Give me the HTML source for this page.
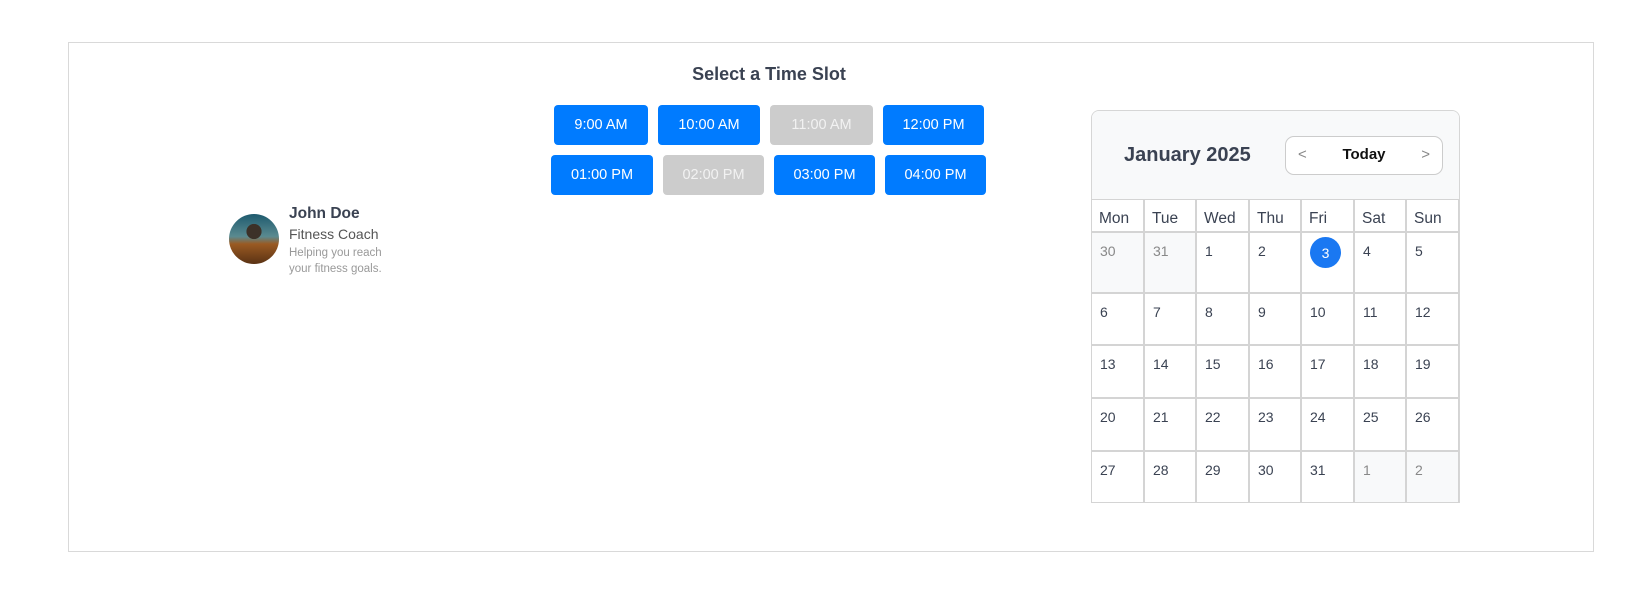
<!DOCTYPE html>
<html><head><meta charset="utf-8"><style>
*{box-sizing:border-box;margin:0;padding:0}
body{width:1636px;height:599px;background:#fff;font-family:"Liberation Sans",sans-serif;position:relative;overflow:hidden;color:#3a4252}
.box{position:absolute;left:68px;top:42px;width:1526px;height:510px;border:1px solid #d9d9d9}
.title{position:absolute;left:0;width:1538px;top:64px;text-align:center;font-size:18px;font-weight:bold;color:#3a4252}
.b{position:absolute;height:40px;border-radius:4px;background:#007bff;color:#fff;font-size:14.5px;display:flex;align-items:center;justify-content:center}
.g{background:#cccccc;color:#f2f2f2}
.av{position:absolute;left:229px;top:214px;width:50px;height:50px;border-radius:50%;background:radial-gradient(circle at 50% 35%,#3c3128 0 18%,transparent 19%),linear-gradient(180deg,#1e5a6e 0%,#5a8a90 45%,#9a5a22 60%,#5a3214 100%)}
.cal{position:absolute;left:1091px;top:110px;width:369px;height:393px;border:1px solid #d6d6d6;border-radius:8px 8px 0 0;overflow:hidden;background:#fff}
.hd{position:absolute;left:0;top:0;width:100%;height:89px;background:#f8f9fa}
.c{position:absolute;border:1px solid #d4d4d4;font-size:14px;padding:10px 0 0 8px;color:#3a4252}
.o{background:#f8f9fa;color:#888}
.dh{font-size:15.5px;padding:10px 0 0 7px}
</style></head><body>
<div class="box"></div>
<div class="title">Select a Time Slot</div>
<div class="b" style="left:554px;top:105px;width:94px">9:00 AM</div>
<div class="b" style="left:658px;top:105px;width:102px">10:00 AM</div>
<div class="b g" style="left:770px;top:105px;width:103px">11:00 AM</div>
<div class="b" style="left:883px;top:105px;width:101px">12:00 PM</div>
<div class="b" style="left:551px;top:155px;width:102px">01:00 PM</div>
<div class="b g" style="left:663px;top:155px;width:101px">02:00 PM</div>
<div class="b" style="left:774px;top:155px;width:101px">03:00 PM</div>
<div class="b" style="left:885px;top:155px;width:101px">04:00 PM</div>

<div class="av"></div>
<div style="position:absolute;left:289px;top:205px;font-size:15.5px;font-weight:bold;color:#3a4252">John Doe</div>
<div style="position:absolute;left:289px;top:226px;font-size:14px;color:#555">Fitness Coach</div>
<div style="position:absolute;left:289px;top:245px;font-size:11.5px;line-height:16px;color:#999">Helping you reach<br>your fitness goals.</div>

<div class="cal">
<div class="hd"></div>
<div style="position:absolute;left:32px;top:33px;font-size:20px;font-weight:bold;color:#3a4252">January 2025</div>
<div style="position:absolute;left:193px;top:25px;width:158px;height:39px;border:1px solid #ccc;border-radius:9px;background:#fff">
<span style="position:absolute;left:12px;top:9px;color:#888;font-size:15px">&lt;</span>
<span style="position:absolute;left:0;width:100%;text-align:center;top:9px;font-weight:bold;color:#111;font-size:15px">Today</span>
<span style="position:absolute;right:12px;top:9px;color:#888;font-size:15px">&gt;</span>
</div>
</div>
<div id="g"></div>
<script>
var L=1091,W=52.57,rows=[199,232,293,345,398,451,503];
var days=["Mon","Tue","Wed","Thu","Fri","Sat","Sun"];
var nums=[30,31].concat(Array.from({length:31},(_,i)=>i+1)).concat([1,2]);
var h="";
for(var r=0;r<6;r++)for(var c=0;c<7;c++){
var x=Math.round(L+c*W),x2=Math.round(L+(c+1)*W),y=rows[r],y2=rows[r+1];
var cls="c",t;
if(r==0){cls+=" dh";t=days[c];}else{var i=(r-1)*7+c;t=nums[i];if(i<2||i>32)cls+=" o";
if(i==4)t='<span style="position:absolute;left:8px;top:4px;width:31px;height:31px;border-radius:50%;background:#1a78f2;color:#fff;display:flex;align-items:center;justify-content:center">3</span>';}
h+='<div class="'+cls+'" style="left:'+x+'px;top:'+y+'px;width:'+(x2-x)+'px;height:'+(y2-y)+'px">'+t+'</div>';}
document.getElementById("g").innerHTML=h;
</script>
</body></html>
